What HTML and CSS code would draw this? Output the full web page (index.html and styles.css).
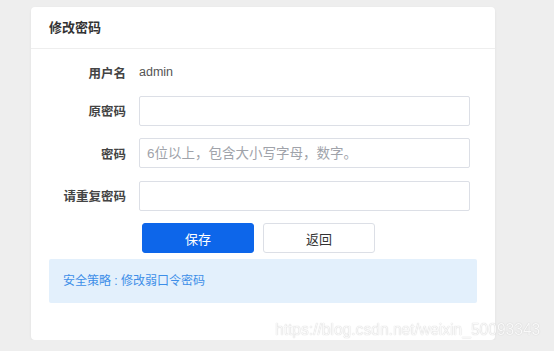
FILE: index.html
```html
<!DOCTYPE html>
<html lang="zh-CN">
<head>
    <meta charset="UTF-8">
    <meta name="viewport" content="width=device-width, initial-scale=1.0">
    <title>修改密码</title>
    <link rel="stylesheet" href="styles.css">
</head>
<body>
    <!-- 修改密码卡片 -->
    <div class="card">
        <div class="card-header">修改密码</div>

        <div class="card-body">
            <div class="form">
                <label class="form-label">用户名</label>
                <div class="form-text">admin</div>

                <label class="form-label" for="old-pwd">原密码</label>
                <input class="form-input" type="password" id="old-pwd">

                <label class="form-label" for="new-pwd">密码</label>
                <input class="form-input" type="password" id="new-pwd" placeholder="6位以上，包含大小写字母，数字。">

                <label class="form-label" for="re-pwd">请重复密码</label>
                <input class="form-input" type="password" id="re-pwd">

                <div></div>
                <div class="form-actions">
                    <button class="btn btn-primary">保存</button>
                    <button class="btn">返回</button>
                </div>
            </div>

            <div class="tip">安全策略 : 修改弱口令密码</div>
        </div>
    </div>

    <div class="watermark">https://blog.csdn.net/weixin_50093343</div>
</body>
</html>
```

FILE: styles.css
```css
/* 基础样式 */
body {
    font-family: "Liberation Sans", "Noto Sans CJK SC", sans-serif;
    background-color: #eeeeee;
    margin: 0;
    padding: 7px 0 0 31px;
    color: #333;
}

/* 卡片 */
.card {
    width: 464px;
    height: 333px;
    background: #fff;
    border-radius: 4px;
    box-shadow: 0 1px 3px rgba(0, 0, 0, 0.06);
    box-sizing: border-box;
}

.card-header {
    height: 41px;
    line-height: 41px;
    padding-left: 18px;
    font-size: 13px;
    font-weight: bold;
    color: #333;
    border-bottom: 1px solid #eeeeee;
}

.card-body {
    padding: 12px 18px 0 18px;
}

/* 表单 */
.form {
    display: grid;
    grid-template-columns: 77px 331px;
    column-gap: 13px;
    row-gap: 12.5px;
    align-items: center;
}

.form-label {
    text-align: right;
    font-size: 12.5px;
    font-weight: bold;
    color: #444;
}

.form-text {
    height: 22px;
    line-height: 22px;
    font-size: 12.5px;
    color: #555;
}

.form-input {
    height: 30px;
    width: 100%;
    box-sizing: border-box;
    border: 1px solid #dcdfe6;
    border-radius: 2px;
    padding: 0 7px;
    font-size: 13.5px;
    font-family: inherit;
    outline: none;
}

.form-input::placeholder {
    color: #a0a3aa;
}

.form-actions {
    display: flex;
    gap: 9px;
    padding-left: 3px;
}

.btn {
    width: 112px;
    height: 30px;
    border: 1px solid #dcdfe6;
    border-radius: 3px;
    background: #fff;
    color: #333;
    font-size: 13px;
    font-family: inherit;
    cursor: pointer;
}

.btn-primary {
    background: #0d66ea;
    border-color: #0d66ea;
    color: #fff;
}

/* 提示 */
.tip {
    margin-top: 6px;
    height: 44px;
    line-height: 44px;
    padding-left: 14px;
    background: #e3f0fc;
    border-radius: 2px;
    font-size: 12px;
    color: #3d8ee8;
}

/* 水印 */
.watermark {
    position: fixed;
    left: 275px;
    top: 321px;
    font-family: "Liberation Sans", sans-serif;
    font-size: 15.6px;
    color: rgba(255, 255, 255, 0.9);
    text-shadow: 0 0 1px #b8b8b8;
}
```
